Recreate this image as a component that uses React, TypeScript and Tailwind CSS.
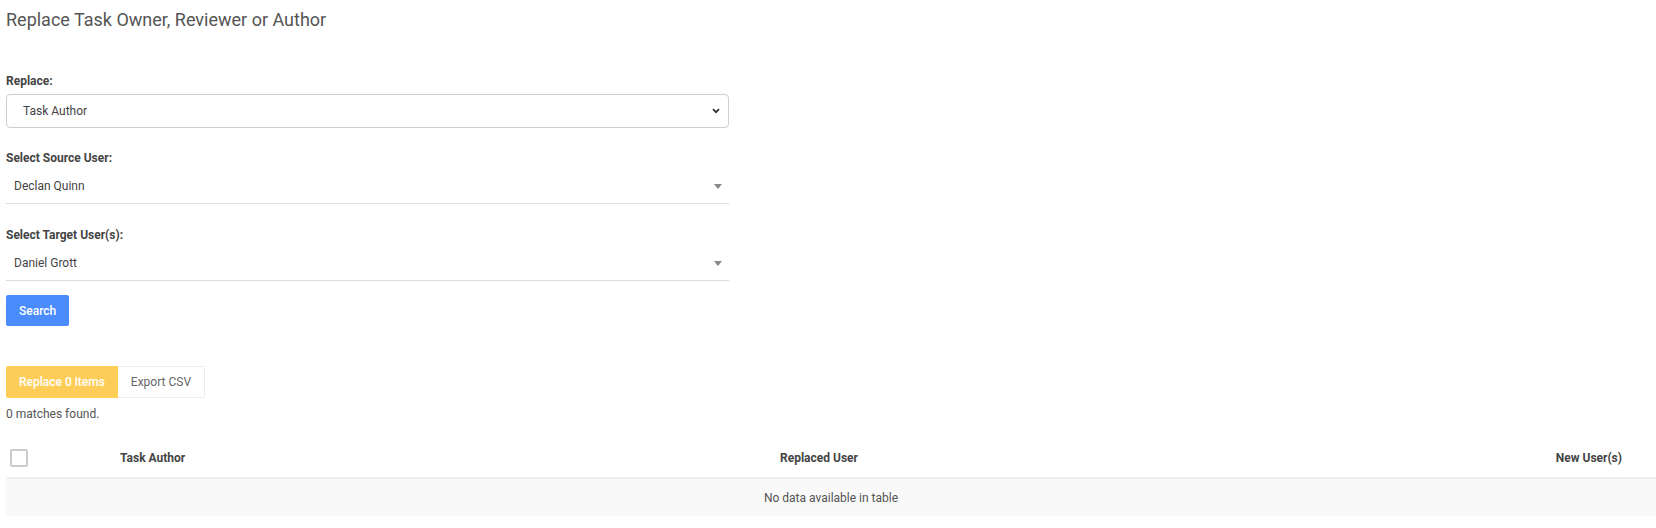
export default function App() {
  return (
    <div className="min-h-screen bg-white pl-[6px] pt-[10px] font-[Roboto,sans-serif] text-[12px] text-[#555]">
      <h1 className="text-[18px] leading-[20px] font-normal text-[#555]">Replace Task Owner, Reviewer or Author</h1>

      <label className="mt-[44px] block leading-[14px] font-bold text-[#444]">Replace:</label>
      <div className="mt-[6px] flex h-[34px] w-[723px] items-center justify-between rounded-[4px] border border-[#cfcfcf] pl-[16px] pr-[8px] text-[#444]">
        <span>Task Author</span>
        <svg width="8" height="6" viewBox="0 0 8 6" className="block">
          <path d="M1 1.2l3 3 3-3" fill="none" stroke="#333" strokeWidth="1.8" />
        </svg>
      </div>

      <label className="mt-[23px] block leading-[14px] font-bold text-[#444]">Select Source User:</label>
      <div className="mt-[4px] flex h-[35px] w-[723px] items-center justify-between border-b border-[#ddd] pl-[8px] pr-[7px] text-[#444]">
        <span>Declan Quinn</span>
        <span className="border-x-[4px] border-t-[5px] border-x-transparent border-t-[#888]" />
      </div>

      <label className="mt-[24px] block leading-[14px] font-bold text-[#444]">Select Target User(s):</label>
      <div className="mt-[4px] flex h-[35px] w-[723px] items-center justify-between border-b border-[#ddd] pl-[8px] pr-[7px] text-[#444]">
        <span>Daniel Grott</span>
        <span className="border-x-[4px] border-t-[5px] border-x-transparent border-t-[#888]" />
      </div>

      <button className="mt-[14px] block h-[31px] rounded-[2px] bg-[#4a8cfd] px-[13px] font-medium text-white">Search</button>

      <div className="mt-[40px] flex h-[32px]">
        <button className="rounded-l-[2px] bg-[#fecd57] px-[13px] font-medium text-white">Replace 0 items</button>
        <button className="rounded-r-[2px] border border-l-0 border-[#ececec] bg-white px-[13px] text-[#666]">Export CSV</button>
      </div>

      <p className="mt-[9px] leading-[14px] text-[#555]">0 matches found.</p>

      <div className="mt-[20px]">
        <div className="grid h-[38px] grid-cols-[114px_660px_1fr_auto] items-center border-b-2 border-[#eee] pb-[2px] font-bold text-[#444]">
          <div className="pl-[4px]">
            <div className="h-[18px] w-[18px] rounded-[2px] border-2 border-[#ccc] bg-white" />
          </div>
          <div>Task Author</div>
          <div>Replaced User</div>
          <div className="pr-[34px] text-right">New User(s)</div>
        </div>
        <div className="flex h-[37px] items-center justify-center bg-[#f9f9f9] text-[#555]">No data available in table</div>
      </div>
    </div>
  );
}
